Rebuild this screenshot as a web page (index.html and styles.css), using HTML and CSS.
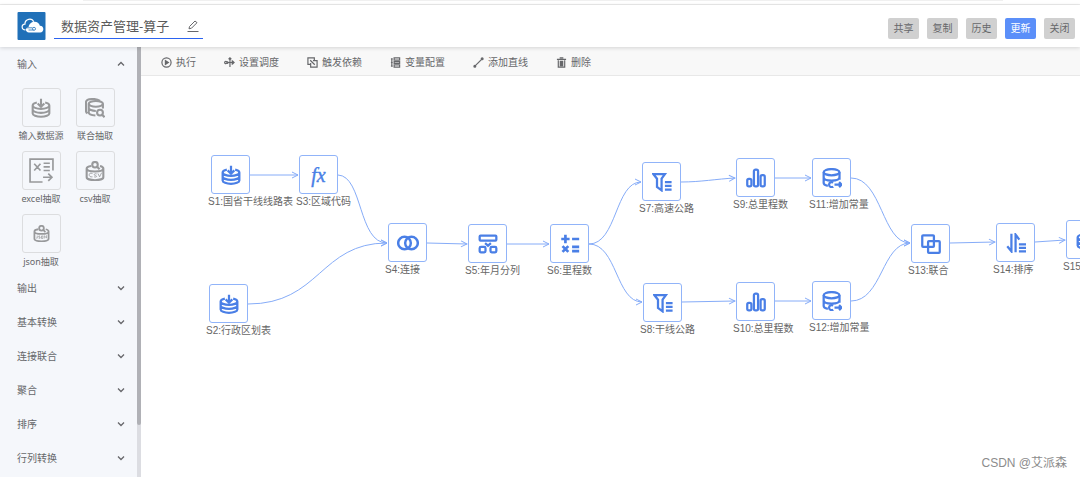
FILE: index.html
```html
<!DOCTYPE html>
<html lang="zh-CN">
<head>
<meta charset="utf-8">
<title>数据资产管理-算子</title>
<link rel="stylesheet" href="styles.css">
</head>
<body>
<svg class="defs" aria-hidden="true">
  <defs>
    <symbol id="db-in" viewBox="0 0 24 24">
      <path d="M12 1v9M8 6.500l4 4 4-4"/>
      <path d="M7 5.500C4 6.200 2 7.400 2 9c0 2.200 4.500 4 10 4s10-1.800 10-4c0-1.600-2-2.800-5-3.500M2 9v9.500c0 2.200 4.500 4 10 4s10-1.800 10-4V9M2 13.800c0 2.200 4.500 4 10 4s10-1.800 10-4"/>
    </symbol>
    <symbol id="db-union" viewBox="0 0 24 24">
      <ellipse cx="13" cy="7" rx="8.500" ry="3.500"/>
      <path d="M4.500 7v10.500c0 1.800 3.500 3.300 8 3.500M21.500 7v5.500M4.500 12c0 2 4 3.500 8.500 3.500M18 3.500C16 2 13 1.200 10 1.200 5 1.200 1.200 2.700 1.200 5v11c0 1 .5 1.800 1.800 2.500"/>
      <circle cx="18" cy="17.500" r="3.500"/><path d="M20.500 20l3 3"/>
    </symbol>
    <symbol id="excel" viewBox="0 0 24 24">
      <path d="M23 12V1H1v22h12M5 5.500l6 6.500M11 5.500L5 12M14 5h6M14 8.500h6M14 12h6M13.500 18.500h8.500M18.500 15l3.500 3.500-3.500 3.500"/>
    </symbol>
    <symbol id="csv" viewBox="0 0 24 24">
      <circle cx="12" cy="4.500" r="3.300"/><path d="M14.500 7l3 3"/>
      <path d="M7.500 6C4 6.500 2 7.500 2 9c0 2.200 4.500 3.500 10 3.500S22 11.200 22 9c0-1.500-2-2.500-4-3M2 9v10.500c0 2 4.500 3.500 10 3.500s10-1.500 10-3.500V9"/>
      <path class="fine" d="M9 15c-3-1-4 0-4 1.500S6 19.500 9 19M14 15.500c-3-1-4 1.500-1.500 2 2.500.5 1.500 2.500-1.500 1.500M15.500 15l2 4 2.500-5"/>
    </symbol>
    <symbol id="json" viewBox="0 0 24 24">
      <circle cx="12" cy="4.500" r="3.300"/><path d="M14.500 7l3 3"/>
      <path d="M7.500 6C4 6.500 2 7.500 2 9c0 2.200 4.500 3.500 10 3.500S22 11.200 22 9c0-1.500-2-2.500-4-3M2 9v10.500c0 2 4.500 3.500 10 3.500s10-1.500 10-3.500V9"/>
      <path class="fine" d="M6 15v3.500H4.500M10 15.500H8.200v1.500H10v1.700H8M12 15.500h2V19h-2zM16 19v-4l3 3.500v-4"/>
    </symbol>
    <symbol id="join" viewBox="0 0 24 24">
      <circle cx="8.200" cy="12" r="6.900"/><circle cx="15.800" cy="12" r="6.900"/>
    </symbol>
    <symbol id="split" viewBox="0 0 24 24">
      <rect x="2" y="2" width="20" height="6" rx="1"/><rect x="2" y="15.500" width="7" height="6.500" rx="1.500"/><rect x="15" y="15.500" width="7" height="6.500" rx="1.500"/><path d="M8.500 11l3.500 3 3.500-3"/>
    </symbol>
    <symbol id="calc" viewBox="0 0 24 24">
      <path class="thick" d="M6.500 1v10M1.500 6h10M14.500 6H23M3 14.500l7 7M10 14.500l-7 7M14.500 15.500H23M14.500 20.500H23"/>
    </symbol>
    <symbol id="filter" viewBox="0 0 24 24">
      <path d="M1.500 2.500H15.500L11.500 8v14L6 18V8zM15.500 12H23.500M15.500 16.500H23.500M15.500 21H23.500"/>
    </symbol>
    <symbol id="bars" viewBox="0 0 24 24">
      <rect x="1.500" y="13" width="5" height="9" rx="2"/><rect x="9.500" y="2" width="5" height="20" rx="2"/><rect x="17.500" y="8.500" width="5" height="13.500" rx="2"/>
    </symbol>
    <symbol id="constant" viewBox="0 0 24 24">
      <ellipse cx="11.500" cy="5" rx="9.500" ry="3.700"/>
      <path d="M2 5v13c0 1.700 2 2.800 5 3.400M21 5v9M2 11c0 2.500 4.500 4 9.500 4s9.500-1.500 9.500-4"/>
      <path d="M13.500 17.500c-3-1.500-5 .3-5 2.500s2.500 4 5 2.500M15 20h8M20.500 17l3 3-3 3"/>
    </symbol>
    <symbol id="union" viewBox="0 0 24 24">
      <rect x="1.500" y="1.500" width="14" height="14" rx="1"/><rect x="8.500" y="8.500" width="14" height="14" rx="1"/>
    </symbol>
    <symbol id="sort" viewBox="0 0 24 24">
      <path d="M6.500 1V22L1.500 16M11.500 23V2l4.500 6M15.500 13.500H24M15.500 17.700H24M15.500 22H24"/>
    </symbol>
    <symbol id="chevron" viewBox="0 0 10 10"><path d="M2 3.500l3 3 3-3"/></symbol>
    <marker id="arrow" viewBox="0 0 8 8" refX="7" refY="4" markerWidth="8" markerHeight="8" markerUnits="userSpaceOnUse" orient="auto"><path d="M1 1l6 3-6 3"/></marker>
  </defs>
</svg>

<div class="topline"><div class="topline-bar"></div></div>
<header class="header">
  <svg class="logo" viewBox="0 0 28 28" aria-label="logo">
    <rect width="28" height="28" rx="1" fill="#2070b8"/>
    <path d="M8 17.800c-4.500 0-4.300-5.800-.6-5.600C7.400 6.500 14.500 5.800 16.200 9.800" fill="none" stroke="#fff" stroke-width="1.200"/>
    <path d="M11.500 20.500c-4 0-4.100-5.200-.4-5.400.3-5.800 9.600-7.800 11.300-1.300 4.800.1 4.400 6.700.3 6.700z" fill="#fff"/>
    <path d="M8.500 15.800h6.500M11 18h5" stroke="#2070b8" stroke-width=".8"/><circle cx="16.500" cy="16.800" r="1.500" fill="none" stroke="#2070b8" stroke-width=".8"/>
  </svg>
  <div class="title">
    <input class="title-input" type="text" value="数据资产管理-算子" aria-label="名称">
    <button class="edit" type="button" aria-label="编辑">
      <svg viewBox="0 0 12 12"><path d="M2 8.800l.5-2.300L8 1l2 1.700-5.500 5.500zM.5 11.500h11"/></svg>
    </button>
  </div>
  <div class="actions">
    <button class="btn" type="button">共享</button>
    <button class="btn" type="button">复制</button>
    <button class="btn" type="button">历史</button>
    <button class="btn primary" type="button">更新</button>
    <button class="btn" type="button">关闭</button>
  </div>
</header>

<div class="main">
  <aside class="sidebar">
    <nav class="groups">
      <button class="group open" type="button" aria-expanded="true">输入<svg><use href="#chevron"/></svg></button>
      <div class="tiles">
        <button class="tile" type="button"><span class="tile-box"><svg><use href="#db-in"/></svg></span><span class="tile-label">输入数据源</span></button>
        <button class="tile" type="button"><span class="tile-box"><svg><use href="#db-union"/></svg></span><span class="tile-label">联合抽取</span></button>
        <button class="tile" type="button"><span class="tile-box large"><svg><use href="#excel"/></svg></span><span class="tile-label">excel抽取</span></button>
        <button class="tile" type="button"><span class="tile-box"><svg><use href="#csv"/></svg></span><span class="tile-label">csv抽取</span></button>
        <button class="tile" type="button"><span class="tile-box small"><svg><use href="#json"/></svg></span><span class="tile-label">json抽取</span></button>
      </div>
      <button class="group" type="button">输出<svg><use href="#chevron"/></svg></button>
      <button class="group" type="button">基本转换<svg><use href="#chevron"/></svg></button>
      <button class="group" type="button">连接联合<svg><use href="#chevron"/></svg></button>
      <button class="group" type="button">聚合<svg><use href="#chevron"/></svg></button>
      <button class="group" type="button">排序<svg><use href="#chevron"/></svg></button>
      <button class="group" type="button">行列转换<svg><use href="#chevron"/></svg></button>
    </nav>
    <div class="scroll"><div class="thumb"></div></div>
  </aside>

  <section class="work">
    <div class="toolbar">
      <button class="tool" type="button"><svg viewBox="0 0 12 12"><circle cx="6" cy="6" r="5"/><path class="solid" d="M4.800 4v4L8 6z"/></svg>执行</button>
      <button class="tool" type="button"><svg viewBox="0 0 12 12"><path d="M3.500 6H11M9.500 4.500L11 6 9.500 7.500M6.500 11V1M5 2.500L6.500 1 8 2.500M4 4.500v3M9 3.500v5"/><circle cx="2" cy="6" r="1.300"/></svg>设置调度</button>
      <button class="tool" type="button"><svg viewBox="0 0 12 12"><path d="M3.500 8H1V1h7v2.500M6.500 4H11v7H4V6.500M3.500 3.500l5 5"/></svg>触发依赖</button>
      <button class="tool" type="button"><svg viewBox="0 0 12 12"><path d="M1 2h2M1 6h2M1 10h2M2 2v8M4.500 1h6v2.500h-6zM4.500 5h6v2h-6zM4.500 8.500h6V11h-6z"/></svg>变量配置</button>
      <button class="tool" type="button"><svg viewBox="0 0 12 12"><path d="M2 10l8-8"/><circle class="solid" cx="2" cy="10" r="1"/><circle class="solid" cx="10" cy="2" r="1"/></svg>添加直线</button>
      <button class="tool" type="button"><svg viewBox="0 0 12 12"><path d="M1 2.500h10M4 1h4M2.500 3.500V11h7V3.500M4.700 4v6M6 4v6M7.300 4v6"/></svg>删除</button>
    </div>
    <div class="canvas">
      <svg class="edges" viewBox="0 0 939 401">
        <path d="M109 99L157 99"/>
        <path d="M197 99C222 100 217 167 246 167"/>
        <path d="M107 228C179 228 179 167 246 167"/>
        <path d="M286 167L326 168"/>
        <path d="M366 168L408 168"/>
        <path d="M448 168C476 168 474 106 500 106"/>
        <path d="M448 168C476 168 475 226 501 226"/>
        <path d="M540 106C560 106 575 103 594 102"/>
        <path d="M541 226L594 225"/>
        <path d="M634 102L670 102"/>
        <path d="M634 225L670 225"/>
        <path d="M710 102C741 102 741 167 769 167"/>
        <path d="M710 225C741 225 741 167 769 167"/>
        <path d="M809 167L854 166"/>
        <path d="M894 166L924 164"/>
      </svg>
      <div class="node s1"><span class="node-box"><svg><use href="#db-in"/></svg></span><span class="node-label">S1:国省干线线路表</span></div>
      <div class="node s2"><span class="node-box"><svg><use href="#db-in"/></svg></span><span class="node-label">S2:行政区划表</span></div>
      <div class="node s3"><span class="node-box"><i class="fx">fx</i></span><span class="node-label">S3:区域代码</span></div>
      <div class="node s4"><span class="node-box wide"><svg><use href="#join"/></svg></span><span class="node-label">S4:连接</span></div>
      <div class="node s5"><span class="node-box"><svg><use href="#split"/></svg></span><span class="node-label">S5:年月分列</span></div>
      <div class="node s6"><span class="node-box"><svg><use href="#calc"/></svg></span><span class="node-label">S6:里程数</span></div>
      <div class="node s7"><span class="node-box"><svg><use href="#filter"/></svg></span><span class="node-label">S7:高速公路</span></div>
      <div class="node s8"><span class="node-box"><svg><use href="#filter"/></svg></span><span class="node-label">S8:干线公路</span></div>
      <div class="node s9"><span class="node-box"><svg><use href="#bars"/></svg></span><span class="node-label">S9:总里程数</span></div>
      <div class="node s10"><span class="node-box"><svg><use href="#bars"/></svg></span><span class="node-label">S10:总里程数</span></div>
      <div class="node s11"><span class="node-box"><svg><use href="#constant"/></svg></span><span class="node-label">S11:增加常量</span></div>
      <div class="node s12"><span class="node-box"><svg><use href="#constant"/></svg></span><span class="node-label">S12:增加常量</span></div>
      <div class="node s13"><span class="node-box"><svg><use href="#union"/></svg></span><span class="node-label">S13:联合</span></div>
      <div class="node s14"><span class="node-box"><svg><use href="#sort"/></svg></span><span class="node-label">S14:排序</span></div>
      <div class="node s15"><span class="node-box"><svg><use href="#db-in"/></svg></span><span class="node-label">S15</span></div>
      <div class="watermark">CSDN @艾派森</div>
    </div>
  </section>
</div>
</body>
</html>
```
FILE: styles.css
```css
* { box-sizing: border-box; }

body {
  margin: 0;
  height: 100vh;
  display: flex;
  flex-direction: column;
  overflow: hidden;
  background: #fff;
  color: #66676a;
  font: 10px/16px "Noto Sans", "Noto Sans CJK SC", sans-serif;
}

button, input {
  margin: 0;
  padding: 0;
  border: 0;
  background: none;
  color: inherit;
  font: inherit;
}

svg { fill: none; stroke: currentColor; }
.defs { position: absolute; width: 0; height: 0; }

.topline {
  flex: none;
  height: 5px;
  padding: 0 77px 0 83px;
  border-bottom: 1px solid #ececec;
}

.topline-bar { height: 1px; background: #f0f0f0; }

.header {
  position: relative;
  z-index: 1;
  flex: none;
  display: flex;
  align-items: center;
  height: 42px;
  padding: 0 4px 0 17px;
  background: #fff;
  box-shadow: 0 1px 4px rgba(0, 0, 0, 0.15);
}

.logo { width: 29px; height: 28px; stroke: none; }

.title {
  display: flex;
  align-items: center;
  width: 149px;
  height: 26px;
  margin-left: 8px;
  padding: 0 4px 0 7px;
  border-bottom: 1px solid #2b63f0;
}

.title-input {
  flex: 1;
  min-width: 0;
  color: #5a5a5a;
  font-size: 13px;
  line-height: 20px;
}

.edit { display: flex; }
.edit svg { width: 12px; height: 12px; }

.actions { display: flex; gap: 8px; margin-left: auto; padding: 4px 1px 0 0; }

.btn {
  width: 31px;
  height: 21px;
  border-radius: 2px;
  background: #d0d0d0;
}

.btn.primary { background: #5b8ff9; color: #fff; }

.main { flex: 1; display: flex; min-height: 0; }

.sidebar {
  flex: none;
  display: flex;
  width: 141px;
  background: #f5f7fb;
}

.groups { flex: 1; overflow: hidden; }

.group {
  display: flex;
  align-items: center;
  justify-content: space-between;
  width: 100%;
  height: 34px;
  padding: 0 11px 0 17px;
}

.group svg { width: 10px; height: 10px; stroke-width: 1.3; }
.group.open svg { transform: rotate(180deg); }

.tiles {
  display: grid;
  grid-template-columns: 54px 54px;
  row-gap: 7px;
  padding: 7px 0 1px 14px;
}

.tile { display: flex; flex-direction: column; align-items: center; gap: 1px; }

.tile-box {
  display: flex;
  align-items: center;
  justify-content: center;
  width: 39px;
  height: 39px;
  border: 1px solid #dcdddf;
  border-radius: 3px;
  color: #98999b;
}

.tile-box svg { width: 20px; height: 20px; stroke-width: 2.5; }
.tile-box.large svg { width: 25px; height: 25px; stroke-width: 1.6; }
.tile-box.small svg { width: 17px; height: 17px; }
.fine { stroke-width: 1; }
.tile-label { font-size: 9px; white-space: nowrap; }

.scroll { width: 4px; background: #dcdde2; }
.thumb { height: 88%; border-radius: 0 0 2px 2px; background: #b0b1b6; }

.work { flex: 1; min-width: 0; display: flex; flex-direction: column; }

.toolbar {
  flex: none;
  display: flex;
  align-items: center;
  gap: 28px;
  height: 29px;
  padding: 2px 0 0 20px;
  border-bottom: 1px solid #e8e8e8;
  background: #f8f8f8;
}

.tool { display: flex; align-items: center; gap: 4px; white-space: nowrap; }
.tool svg { width: 11px; height: 11px; stroke-width: 1.3; }
.solid { fill: currentColor; }

.canvas { position: relative; flex: 1; overflow: hidden; }

.edges {
  position: absolute;
  left: 0;
  top: 0;
  width: 939px;
  height: 401px;
  stroke: #86acf8;
}

.edges path { marker-end: url(#arrow); }
#arrow path { stroke: #86acf8; marker-end: none; }

.node { position: absolute; width: 39px; }

.node-box {
  display: flex;
  align-items: center;
  justify-content: center;
  height: 39px;
  border: 1px solid #91b4f9;
  border-radius: 3px;
  background: #fff;
  color: #4a7fe6;
}

.node-box svg { width: 20px; height: 20px; stroke-width: 2.7; }
.node-box.wide svg { width: 22px; height: 22px; }
.thick { stroke-width: 3.2; }

.fx { font: italic 20px/20px "Liberation Serif", serif; -webkit-text-stroke: 0.4px currentColor; }

.node-label {
  display: block;
  margin-left: -3px;
  color: #666;
  font-family: "Liberation Sans", "Noto Sans CJK SC", sans-serif;
  line-height: 16px;
  white-space: nowrap;
}

.s1 { left: 70px; top: 79px; }
.s2 { left: 68px; top: 208px; }
.s3 { left: 158px; top: 79px; }
.s4 { left: 247px; top: 147px; }
.s5 { left: 327px; top: 148px; }
.s6 { left: 409px; top: 148px; }
.s7 { left: 501px; top: 86px; }
.s8 { left: 502px; top: 207px; }
.s9 { left: 595px; top: 82px; }
.s10 { left: 595px; top: 206px; }
.s11 { left: 671px; top: 82px; }
.s12 { left: 671px; top: 205px; }
.s13 { left: 770px; top: 148px; }
.s14 { left: 855px; top: 147px; }
.s15 { left: 925px; top: 144px; }

.watermark {
  position: absolute;
  right: 13px;
  bottom: 6px;
  color: #8c8c8c;
  font-family: "Liberation Sans", "Noto Sans CJK SC", sans-serif;
  font-size: 12px;
}
```
